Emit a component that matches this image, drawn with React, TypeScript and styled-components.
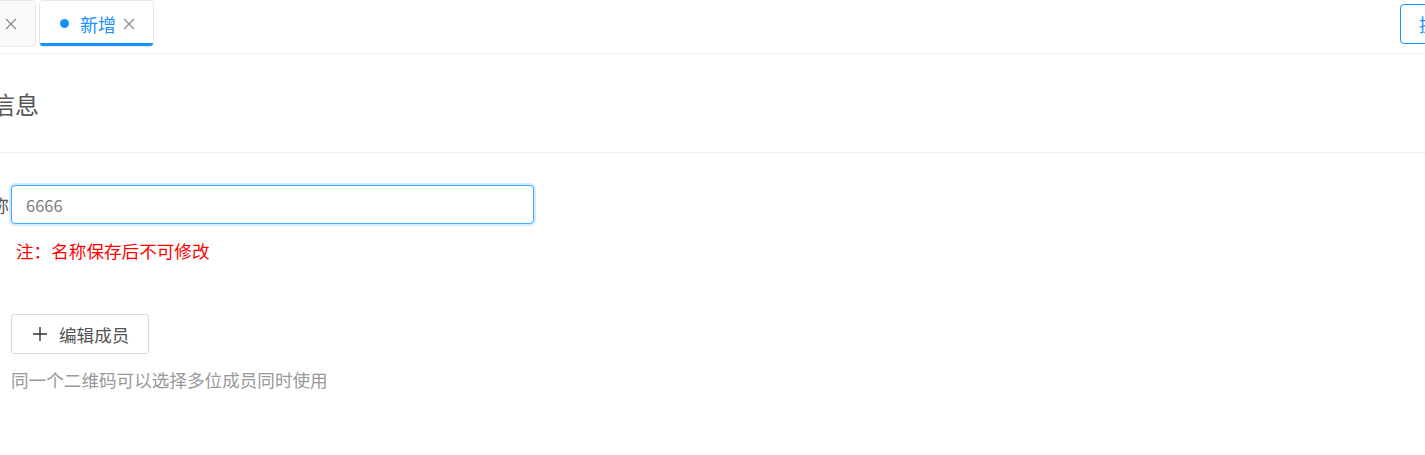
import React from 'react'
import styled, { createGlobalStyle } from 'styled-components'

const GlobalStyle = createGlobalStyle`
  html, body {
    margin: 0;
    padding: 0;
    background: #ffffff;
    font-family: "Noto Sans CJK SC", "Noto Sans", sans-serif;
  }
`

const Viewport = styled.div`
  width: 1425px;
  height: 455px;
  overflow: hidden;
  background: #ffffff;
`

// the page is scrolled sideways, so everything sits 100px to the left
const Page = styled.div`
  width: 1625px;
  margin-left: -100px;
`

const TabBar = styled.div`
  display: flex;
  align-items: flex-start;
  height: 53px;
  padding-left: 41px;
  border-bottom: 1px solid #eeeeee;
`

const Tab = styled.div<{ $active?: boolean }>`
  position: relative;
  display: flex;
  align-items: center;
  box-sizing: border-box;
  height: 47px;
  margin-right: 3px;
  padding: 0 18px 0 20px;
  border: 1px solid #e8e8e8;
  border-radius: 4px;
  background: ${p => (p.$active ? '#ffffff' : '#fafafa')};
  color: ${p => (p.$active ? '#1890ff' : '#666666')};
  font-size: 18px;
  overflow: hidden;

  ${p =>
    p.$active &&
    `
    &::after {
      content: '';
      position: absolute;
      left: -1px;
      right: -1px;
      bottom: -1px;
      height: 4px;
      background: #1890ff;
      border-radius: 0 0 3px 3px;
    }
  `}
`

const Dot = styled.span`
  width: 9px;
  height: 9px;
  border-radius: 50%;
  background: #1890ff;
  margin-right: 11px;
`

const TabText = styled.span`
  line-height: 22px;
`

const Close = styled.svg`
  width: 12px;
  height: 12px;
  margin-left: 7px;
  stroke: #8c8c8c;
  stroke-width: 1.3;
`

const Spacer = styled.div`
  flex: 1;
`

const TopButton = styled.button`
  box-sizing: border-box;
  height: 40px;
  width: 90px;
  margin: 4px 35px 0 0;
  padding: 0 18px;
  border: 1px solid #1890ff;
  border-radius: 4px;
  background: #ffffff;
  color: #1890ff;
  font-family: inherit;
  font-size: 18px;
  text-align: left;
`

const SectionHead = styled.div`
  display: flex;
  align-items: center;
  height: 98px;
  padding-left: 43px;
  border-bottom: 1px solid #eeeeee;
`

const SectionTitle = styled.h2`
  margin: 0;
  font-size: 24px;
  font-weight: 400;
  color: #555555;
`

const Form = styled.div`
  display: flex;
  flex-direction: column;
  padding-top: 32px;
`

const Row = styled.div<{ $gap: number }>`
  display: grid;
  grid-template-columns: 109px 1fr;
  column-gap: 2px;
  margin-bottom: ${p => p.$gap}px;
`

const Label = styled.label`
  display: flex;
  align-items: center;
  justify-content: flex-end;
  height: 39px;
  font-size: 18px;
  color: #555555;
  white-space: nowrap;
`

const Field = styled.div`
  display: flex;
  flex-direction: column;
  align-items: flex-start;
`

const Input = styled.input`
  box-sizing: border-box;
  width: 523px;
  height: 39px;
  padding: 0 14px;
  border: 1px solid #40a9ff;
  border-radius: 4px;
  box-shadow: 0 0 0 2px rgba(24, 144, 255, 0.18);
  outline: none;
  font-family: inherit;
  font-size: 16.5px;
  color: #7a7a7a;
`

const Note = styled.div<{ $tone: 'error' | 'help' }>`
  font-size: 17.6px;
  line-height: 24px;
  margin-top: ${p => (p.$tone === 'error' ? '15px' : '14px')};
  color: ${p => (p.$tone === 'error' ? '#ff0000' : '#999999')};
  padding-left: ${p => (p.$tone === 'error' ? '5px' : '0')};
`

const AddButton = styled.button`
  display: flex;
  align-items: center;
  box-sizing: border-box;
  height: 40px;
  padding: 0 19px 0 21px;
  border: 1px solid #d9d9d9;
  border-radius: 3px;
  background: #ffffff;
  color: #555555;
  font-family: inherit;
  font-size: 17.6px;
`

const PlusIcon = styled.svg`
  width: 14px;
  height: 14px;
  margin-right: 12px;
  stroke: #333333;
  stroke-width: 1.4;
`

const CloseIcon = () => (
  <Close viewBox="0 0 12 12" fill="none">
    <path d="M1 1 L11 11 M11 1 L1 11" />
  </Close>
)

export default function App() {
  return (
    <Viewport>
      <GlobalStyle />
      <Page>
        <TabBar>
          <Tab>
            <TabText>首页</TabText>
            <CloseIcon />
          </Tab>
          <Tab $active>
            <Dot />
            <TabText>新增</TabText>
            <CloseIcon />
          </Tab>
          <Spacer />
          <TopButton>提交</TopButton>
        </TabBar>

        <SectionHead>
          <SectionTitle>基本信息</SectionTitle>
        </SectionHead>

        <Form>
          <Row $gap={51}>
            <Label>二维码名称</Label>
            <Field>
              <Input defaultValue="6666" />
              <Note $tone="error">注：名称保存后不可修改</Note>
            </Field>
          </Row>
          <Row $gap={0}>
            <Label>使用成员：</Label>
            <Field>
              <AddButton>
                <PlusIcon viewBox="0 0 14 14" fill="none">
                  <path d="M7 0 V14 M0 7 H14" />
                </PlusIcon>
                编辑成员
              </AddButton>
              <Note $tone="help">同一个二维码可以选择多位成员同时使用</Note>
            </Field>
          </Row>
        </Form>
      </Page>
    </Viewport>
  )
}
